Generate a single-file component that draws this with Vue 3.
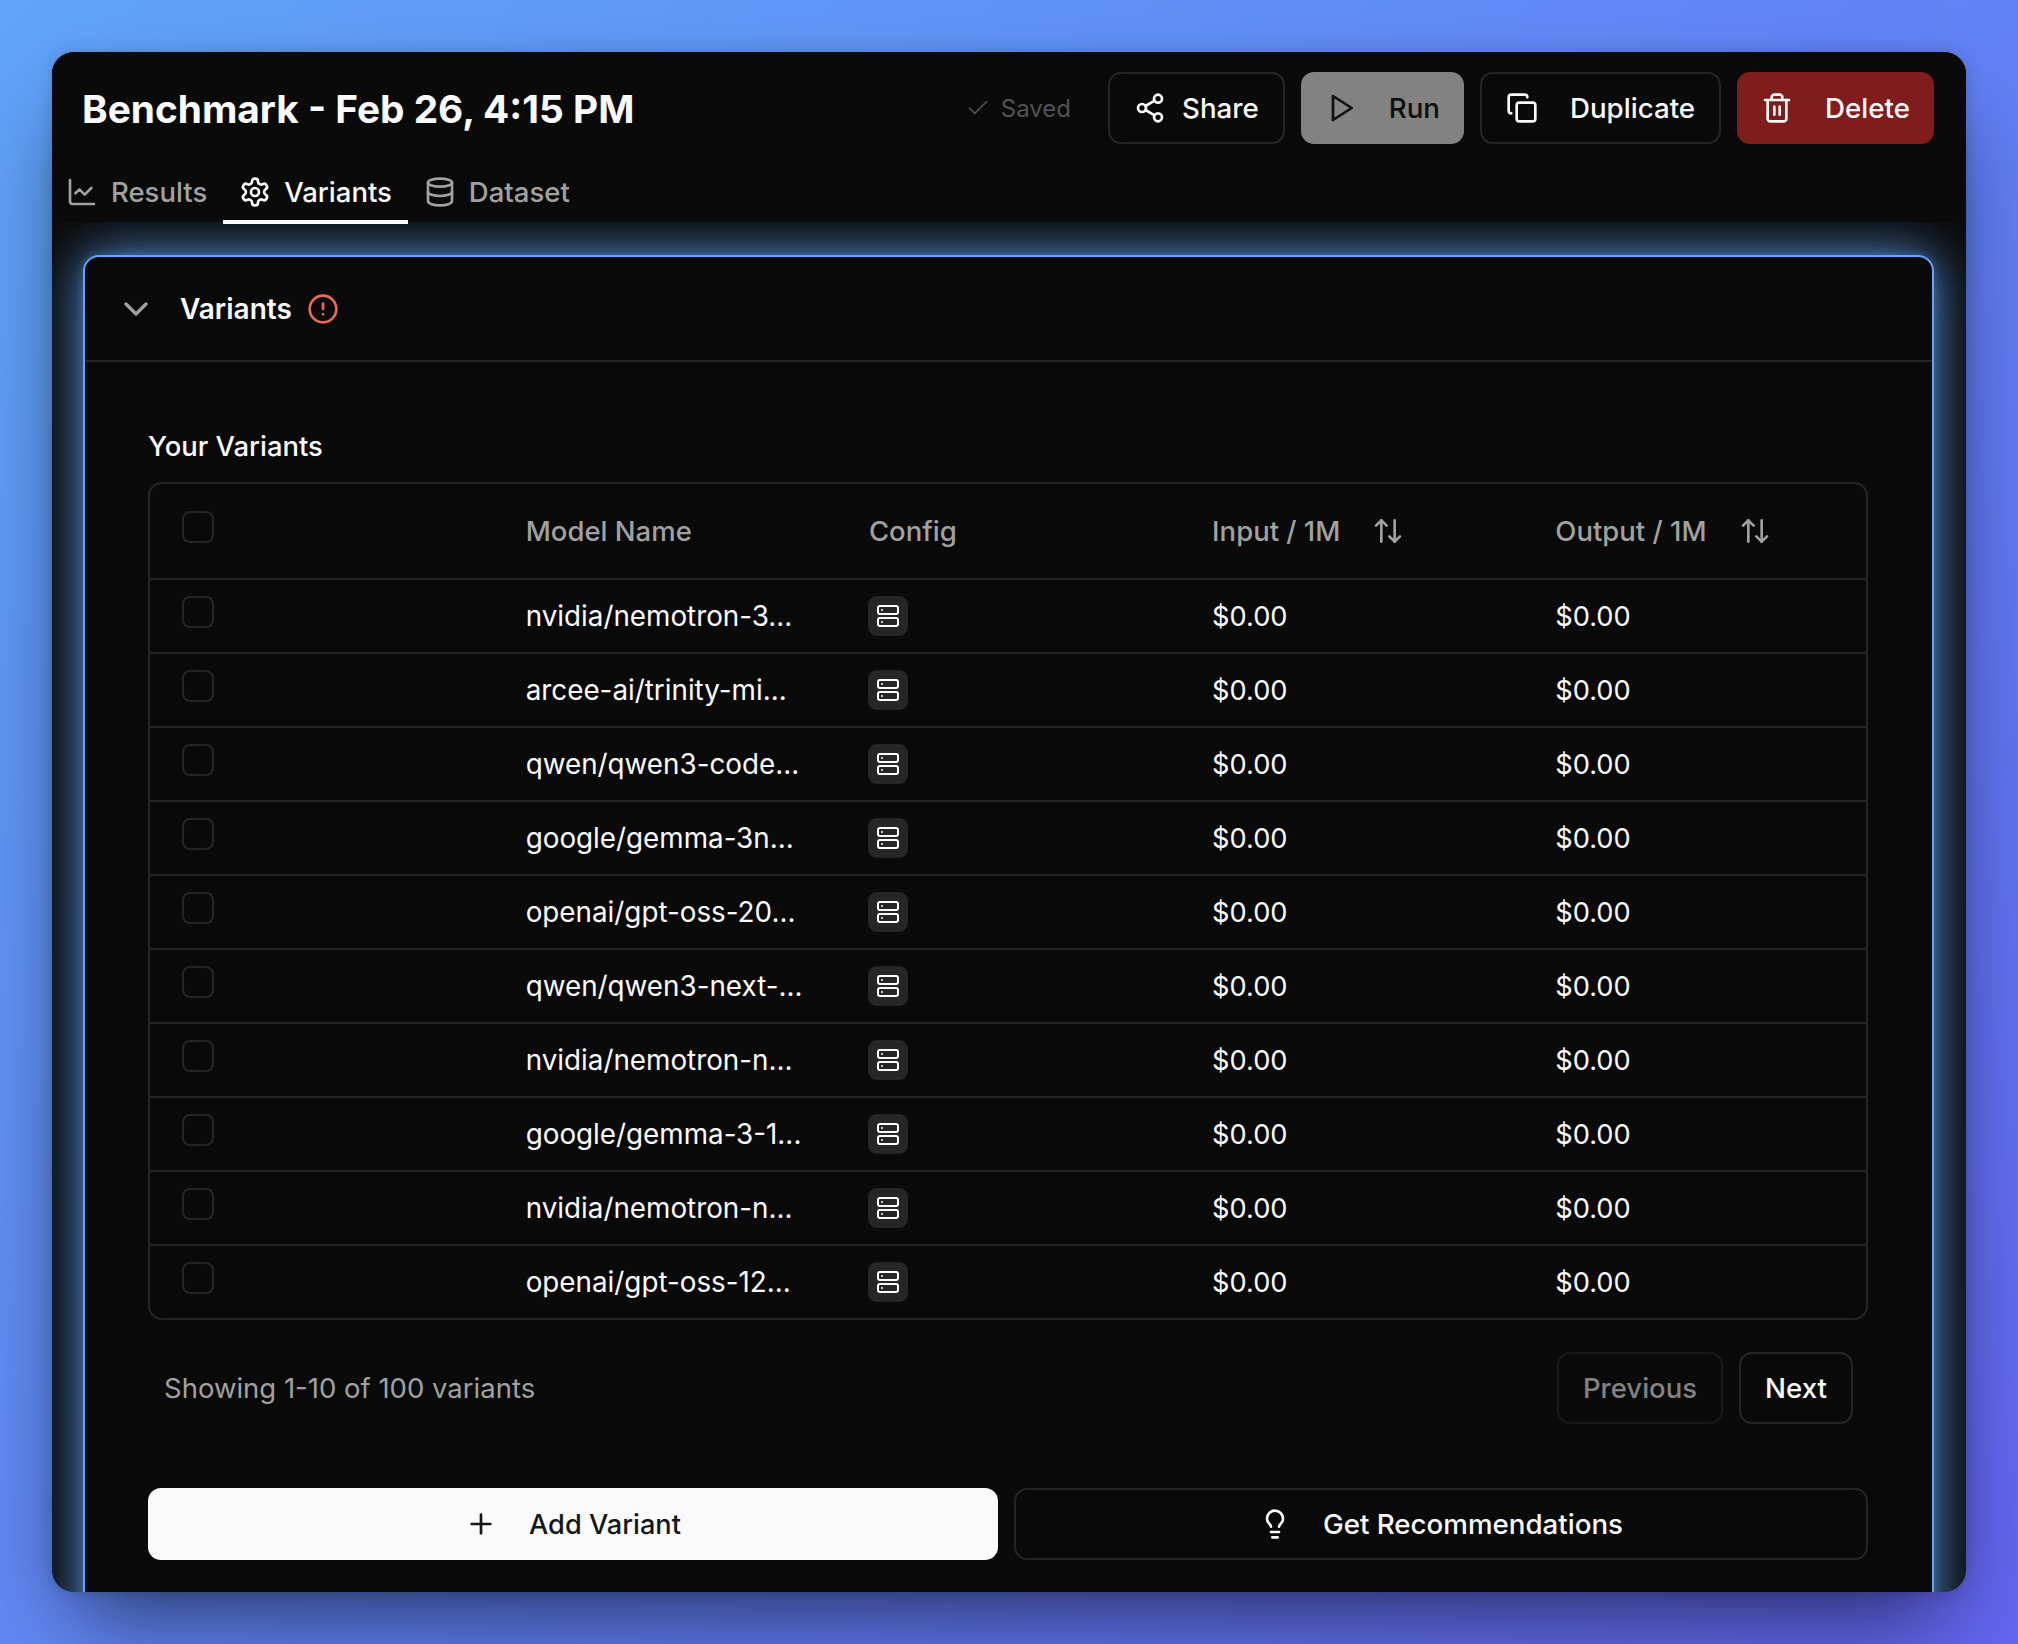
<script setup>
const rows = [
  'nvidia/nemotron-3...', 'arcee-ai/trinity-mi...', 'qwen/qwen3-code...', 'google/gemma-3n...', 'openai/gpt-oss-20...',
  'qwen/qwen3-next-...', 'nvidia/nemotron-n...', 'google/gemma-3-1...', 'nvidia/nemotron-n...', 'openai/gpt-oss-12...'
]
</script>

<template>
  <div class="page">
    <main class="window">
      <header class="top">
        <div class="title-row">
          <h1 class="title">Benchmark - Feb 26, 4:15 PM</h1>
          <div class="actions">
            <span class="saved">
              <svg class="ico-check" viewBox="0 0 24 24"><path d="M20 6 9 17l-5-5" /></svg>
              Saved
            </span>
            <button class="btn outline share">
              <svg class="ico" viewBox="0 0 24 24"><circle cx="18" cy="5" r="3" /><circle cx="6" cy="12" r="3" /><circle cx="18" cy="19" r="3" /><path d="M8.59 13.51 15.42 17.49" /><path d="M15.41 6.51 8.59 10.49" /></svg>
              Share
            </button>
            <button class="btn run">
              <svg class="ico" viewBox="0 0 24 24"><polygon points="6 3 20 12 6 21 6 3" /></svg>
              Run
            </button>
            <button class="btn outline">
              <svg class="ico" viewBox="0 0 24 24"><rect x="8" y="8" width="14" height="14" rx="2" /><path d="M4 16c-1.1 0-2-.9-2-2V4c0-1.1.9-2 2-2h10c1.1 0 2 .9 2 2" /></svg>
              Duplicate
            </button>
            <button class="btn danger">
              <svg class="ico" viewBox="0 0 24 24"><path d="M3 6h18" /><path d="M19 6v14c0 1-1 2-2 2H7c-1 0-2-1-2-2V6" /><path d="M8 6V4c0-1 1-2 2-2h4c1 0 2 1 2 2v2" /><path d="M10 11v6" /><path d="M14 11v6" /></svg>
              Delete
            </button>
          </div>
        </div>
        <nav class="tabs">
          <a class="tab">
            <svg class="ico" viewBox="0 0 24 24"><path d="M3 3v16a2 2 0 0 0 2 2h16" /><path d="m19 9-5 5-4-4-3 3" /></svg>
            Results
          </a>
          <a class="tab active">
            <svg class="ico" viewBox="0 0 24 24"><path d="M12.22 2h-.44a2 2 0 0 0-2 2v.18a2 2 0 0 1-1 1.73l-.43.25a2 2 0 0 1-2 0l-.15-.08a2 2 0 0 0-2.73.73l-.22.38a2 2 0 0 0 .73 2.73l.15.1a2 2 0 0 1 1 1.72v.51a2 2 0 0 1-1 1.74l-.15.09a2 2 0 0 0-.73 2.73l.22.38a2 2 0 0 0 2.73.73l.15-.08a2 2 0 0 1 2 0l.43.25a2 2 0 0 1 1 1.73V20a2 2 0 0 0 2 2h.44a2 2 0 0 0 2-2v-.18a2 2 0 0 1 1-1.73l.43-.25a2 2 0 0 1 2 0l.15.08a2 2 0 0 0 2.73-.73l.22-.39a2 2 0 0 0-.73-2.73l-.15-.08a2 2 0 0 1-1-1.74v-.5a2 2 0 0 1 1-1.74l.15-.09a2 2 0 0 0 .73-2.73l-.22-.38a2 2 0 0 0-2.73-.73l-.15.08a2 2 0 0 1-2 0l-.43-.25a2 2 0 0 1-1-1.73V4a2 2 0 0 0-2-2z" /><circle cx="12" cy="12" r="3" /></svg>
            Variants
          </a>
          <a class="tab">
            <svg class="ico" viewBox="0 0 24 24"><ellipse cx="12" cy="5" rx="9" ry="3" /><path d="M3 5V19A9 3 0 0 0 21 19V5" /><path d="M3 12A9 3 0 0 0 21 12" /></svg>
            Dataset
          </a>
        </nav>
      </header>

      <div class="content">
        <section class="card">
          <div class="card-head">
            <svg class="ico-chevron" viewBox="0 0 24 24"><path d="m6 9 6 6 6-6" /></svg>
            <span class="card-title">Variants</span>
            <svg class="ico-alert" viewBox="0 0 24 24"><circle cx="12" cy="12" r="10" /><path d="M12 8v4" /><path d="M12 16h.01" /></svg>
          </div>
          <div class="card-body">
            <h2 class="label">Your Variants</h2>
            <div class="table">
              <div class="row head">
                <div class="cell"><span class="box" /></div>
                <div class="cell">Model Name</div>
                <div class="cell">Config</div>
                <div class="cell">
                  Input / 1M
                  <svg class="ico sort" viewBox="0 0 24 24"><path d="m21 16-4 4-4-4" /><path d="M17 20V4" /><path d="m3 8 4-4 4 4" /><path d="M7 4v16" /></svg>
                </div>
                <div class="cell">
                  Output / 1M
                  <svg class="ico sort" viewBox="0 0 24 24"><path d="m21 16-4 4-4-4" /><path d="M17 20V4" /><path d="m3 8 4-4 4 4" /><path d="M7 4v16" /></svg>
                </div>
              </div>
              <div v-for="(name, i) in rows" :key="i" class="row">
                <div class="cell"><span class="box" /></div>
                <div class="cell name">{{ name }}</div>
                <div class="cell">
                  <span class="badge">
                    <svg class="ico-server" viewBox="0 0 24 24"><rect x="2" y="2" width="20" height="8" rx="2" /><rect x="2" y="14" width="20" height="8" rx="2" /><path d="M6 6h.01" /><path d="M6 18h.01" /></svg>
                  </span>
                </div>
                <div class="cell money">$0.00</div>
                <div class="cell money">$0.00</div>
              </div>
            </div>
            <div class="pager">
              <span class="count">Showing 1-10 of 100 variants</span>
              <div class="pager-btns">
                <button class="btn outline disabled">Previous</button>
                <button class="btn outline">Next</button>
              </div>
            </div>
            <div class="bottom">
              <button class="btn light">
                <svg class="ico" viewBox="0 0 24 24"><path d="M5 12h14" /><path d="M12 5v14" /></svg>
                Add Variant
              </button>
              <button class="btn outline">
                <svg class="ico" viewBox="0 0 24 24"><path d="M15 14c.2-1 .7-1.7 1.5-2.5 1-.9 1.5-2.2 1.5-3.5A6 6 0 0 0 6 8c0 1 .2 2.2 1.5 3.5.7.7 1.3 1.5 1.5 2.5" /><path d="M9 18h6" /><path d="M10 22h4" /></svg>
                Get Recommendations
              </button>
            </div>
          </div>
        </section>
      </div>
    </main>
  </div>
</template>

<style>
html, body { margin: 0; }
</style>

<style scoped>
* { box-sizing: border-box; }
.page {
  width: 2018px;
  height: 1644px;
  padding: 52px;
  background: linear-gradient(135deg, #60a5fa 0%, #6366f1 100%);
  font-family: Inter, "Liberation Sans", sans-serif;
  font-size: 27.5px;
  color: #fafafa;
  overflow: hidden;
}
svg { fill: none; stroke: currentColor; stroke-width: 2; stroke-linecap: round; stroke-linejoin: round; flex: none; }
.window {
  width: 1914px;
  height: 1540px;
  border-radius: 22px;
  background: #0a0a0a;
  overflow: hidden;
  display: flex;
  flex-direction: column;
  box-shadow: 0 45px 90px -22px rgba(0, 0, 0, 0.6), 0 0 16px rgba(0, 0, 0, 0.15);
}
.top { position: relative; z-index: 1; flex: none; height: 170px; padding: 20px 32px 0 31px; background: #0a0a0a; }
.title-row { display: flex; justify-content: space-between; align-items: center; }
.title { margin: 2px 0 0 -1px; font-size: 38.8px; font-weight: 650; line-height: 50px; }
.actions { display: flex; align-items: center; gap: 16px; }
.saved { display: flex; align-items: center; gap: 10px; margin-right: 21px; font-size: 24px; color: #525252; }
.ico-check { width: 26px; height: 26px; stroke-width: 1.6; }
.ico { width: 32px; height: 32px; }
.btn {
  display: inline-flex;
  align-items: center;
  justify-content: center;
  gap: 32px;
  height: 72px;
  padding: 0 24px;
  border: 0;
  border-radius: 13px;
  background: transparent;
  color: #fafafa;
  font: 500 27.7px Inter, "Liberation Sans", sans-serif;
}
.outline { border: 2px solid #262626; }
.share { gap: 16px; }
.run { background: #828282; color: #0f0f0f; }
.danger { background: #7f1d1d; }
.light { background: #fafafa; color: #171717; font-size: 27.2px; }
.disabled { color: rgba(250, 250, 250, 0.5); border-color: #191919; font-size: 27.5px; }
.tabs { display: flex; margin: 18px 0 0 -33px; }
.tab {
  position: relative;
  display: flex;
  align-items: center;
  gap: 13px;
  height: 60px;
  padding: 0 16px;
  font-weight: 500;
  color: #a1a1a1;
}
.tab.active { color: #fafafa; }
.tab.active::after { content: ""; position: absolute; left: 0; right: 0; bottom: -2px; height: 4px; background: #fafafa; }
.content { flex: 1; min-height: 0; overflow: hidden; padding: 33px 32px 0 31px; }
.card {
  border: 2px solid #60a5fa;
  border-radius: 16px;
  box-shadow: 0 0 54px rgba(96, 165, 250, 0.9), 0 0 10px rgba(96, 165, 250, 0.3);
  background: #0a0a0a;
  min-height: 1500px;
}
.card-head { display: flex; align-items: center; height: 105px; padding-left: 31px; border-bottom: 2px solid #262626; }
.ico-chevron { width: 40px; height: 40px; color: #a1a1a1; margin-right: 24px; }
.card-title { font-size: 28px; font-weight: 600; }
.ico-alert { width: 32px; height: 32px; color: #ea6a56; margin-left: 15px; }
.card-body { padding: 66px 64px 0 63px; }
.label { margin: 0 0 18px; font-size: 27.4px; font-weight: 450; line-height: 36px; }
.table { border: 2px solid #262626; border-radius: 14px; }
.row { display: grid; grid-template-columns: repeat(5, 1fr); height: 74px; border-top: 2px solid #262626; align-items: center; }
.row.head { height: 94px; border-top: 0; color: #a1a1a1; font-size: 27.5px; font-weight: 450; }
.cell { display: flex; align-items: center; padding-left: 32.5px; }
.name { font-size: 27.8px; }
.money { font-size: 27.2px; }
.box { display: block; width: 32px; height: 32px; border: 2px solid #262626; border-radius: 8px; margin: -8px 0 0 -1px; }
.head .box { margin-top: -9px; }
.sort { margin-left: 32px; }
.badge { display: flex; align-items: center; justify-content: center; width: 40px; height: 40px; border-radius: 9px; background: #262626; margin-left: -1px; }
.ico-server { width: 24px; height: 24px; }
.pager { display: flex; justify-content: space-between; align-items: center; margin-top: 32px; padding: 0 15px 0 16px; }
.count { color: #a1a1a1; }
.pager-btns { display: flex; gap: 16px; }
.bottom { display: grid; grid-template-columns: 850px 1fr; gap: 16px; margin-top: 64px; }
</style>
